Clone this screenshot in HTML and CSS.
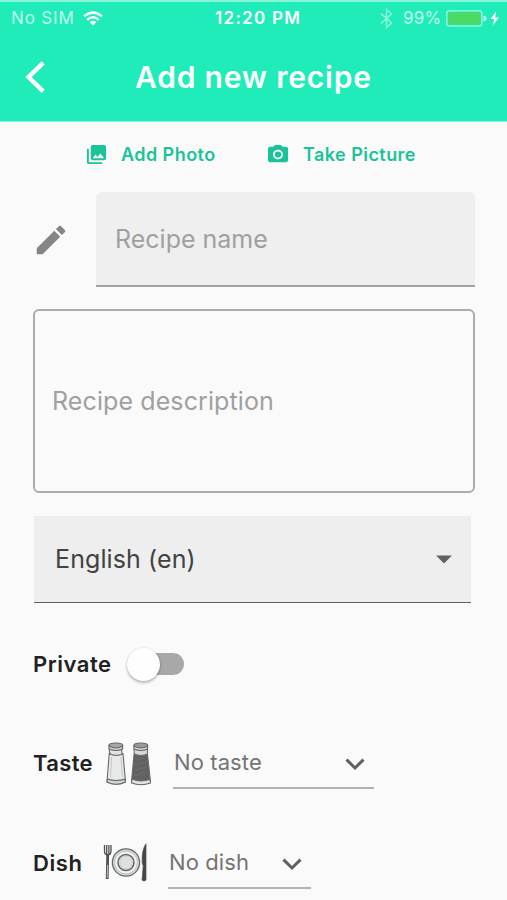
FILE: index.html
```html
<!DOCTYPE html>
<html lang="en">
<head>
<meta charset="utf-8">
<title>Add new recipe</title>
<link rel="stylesheet" href="styles.css">
</head>
<body>
<header class="header">
  <div class="status">
    <div class="status-left">
      <span class="carrier">No SIM</span>
      <svg class="wifi" width="20" height="15" viewBox="0 0 20 15" fill="none" stroke="#fff" stroke-width="2.4"><path d="M1 5.3Q10-2.5 19 5.3M4.2 8.8Q10 3.8 15.8 8.8"/><path d="M6.6 11.1Q10 8.3 13.4 11.1L10 14.6Z" fill="#fff" stroke="none"/></svg>
    </div>
    <span class="clock">12:20 PM</span>
    <div class="status-right">
      <svg class="bluetooth" width="13" height="21" viewBox="0 0 13 21" fill="none" stroke="#fff" stroke-width="1.5"><path d="M1 5.5L11.5 15 6.5 19.5V1.5L11.5 6 1 15.5"/></svg>
      <span class="percent">99%</span>
      <svg class="battery" width="53" height="17" viewBox="0 0 53 17"><rect x=".8" y=".8" width="35" height="15.2" rx="2.5" fill="none" stroke="#8df5dc" stroke-width="1.5"/><rect x="2.4" y="2.3" width="32" height="12.2" rx="1" fill="#4cd964"/><path d="M37.5 5.5Q40.5 6.2 40.5 8.5T37.5 11.5Z" fill="#c9fbef"/><path d="M50 1.5L44.5 9H48.2L46.7 15.5 53 7.4H49.2Z" fill="#fff"/></svg>
    </div>
  </div>
  <div class="navbar">
    <svg class="back" width="22" height="34" viewBox="0 0 22 34" fill="none" stroke="#fff" stroke-width="4.4"><path d="M18.2 2.8L3.5 17.1 18.2 31.4"/></svg>
    <h1 class="title">Add new recipe</h1>
  </div>
</header>
<main class="form">
  <div class="actions">
    <div class="action add-photo">
      <svg width="23" height="23" viewBox="0 0 24 24" fill="currentColor"><path d="M22 16V4c0-1.100-.9-2-2-2H8c-1.100 0-2 .9-2 2v12c0 1.100.9 2 2 2h12c1.100 0 2-.9 2-2zm-11-4l2.030 2.710L16 11l4 5H8l3-4zM2 6v14c0 1.100.9 2 2 2h14v-2H4V6H2z"/></svg>
      <span>Add Photo</span>
    </div>
    <div class="action take-picture">
      <svg width="24" height="23" viewBox="0 0 24 24" preserveAspectRatio="none" fill="currentColor"><circle cx="12" cy="12" r="3.200"/><path d="M9 2L7.170 4H4c-1.100 0-2 .9-2 2v12c0 1.100.9 2 2 2h16c1.100 0 2-.9 2-2V6c0-1.100-.9-2-2-2h-3.170L15 2H9zm3 15c-2.760 0-5-2.240-5-5s2.240-5 5-5 5 2.240 5 5-2.240 5-5 5z"/></svg>
      <span>Take Picture</span>
    </div>
  </div>
  <div class="name-row">
    <svg class="pencil" width="38" height="38" viewBox="0 0 24 24" fill="#858585"><path d="M3 17.250V21h3.750L17.810 9.940l-3.750-3.750L3 17.250zM20.710 7.040c.39-.39.39-1.020 0-1.410l-2.340-2.340c-.39-.39-1.020-.39-1.410 0l-1.830 1.830 3.750 3.750 1.830-1.830z"/></svg>
    <div class="name-field"><span class="name-label">Recipe name</span></div>
  </div>
  <div class="description"><span class="desc-label">Recipe description</span></div>
  <div class="language">
    <span class="lang-label">English (en)</span>
    <svg width="16" height="9" viewBox="0 0 16 9"><path d="M0 .5H16L8 8.500Z" fill="#616161"/></svg>
  </div>
  <div class="private-row">
    <span class="label private-label">Private</span>
    <div class="switch"><span class="thumb"></span></div>
  </div>
  <div class="row taste-row">
    <span class="label taste-label">Taste</span>
    <svg class="shakers" width="46" height="45" viewBox="0 0 46 45" stroke="#686868" stroke-width="1.1" stroke-linejoin="round">
      <path d="M3.200 11.500Q10 15 17 11.500L19.500 40Q11 44.500 1 40Z" fill="#e8e9e9"/>
      <path d="M3.400 6V10L5 12.500Q10 14 16 12.500L15.500 6Z" fill="#e2e4e4"/>
      <ellipse cx="9.800" cy="3.700" rx="7" ry="2.700" fill="#a5a8a8"/>
      <path d="M3 4V7Q10 10 16.600 7V4Q10 8 3 4Z" fill="#d5d7d7"/>
      <path d="M1.500 37Q10 40 19.200 37V40Q10 44.500 1 40Z" fill="#d1d4d4"/>
      <path d="M5.500 15L4.500 35M15 15L16.500 35" fill="none" stroke="#bbb" stroke-width=".8"/>
      <path d="M28 12.500Q34 15 41.500 12.500L44.500 40Q35 44.500 25.500 40Z" fill="#626262"/>
      <path d="M28.200 6V12Q35 15 41.500 12V6Z" fill="#d9dbdb"/>
      <ellipse cx="34.800" cy="3.700" rx="7" ry="2.700" fill="#999"/>
      <path d="M28 4V7Q35 10 41.600 7V4Q35 8 28 4Z" fill="#d5d7d7"/>
      <path d="M26 37Q34 40.500 44 37.500L44.500 41Q35 44.500 25.500 41Z" fill="#e2e4e4"/>
      <path d="M30 18L38 16M29 23L40 20M29 28L41 25M28 34L39 30" stroke="#6d6d6d" fill="none"/>
    </svg>
    <div class="select taste-select">
      <span class="taste-value">No taste</span>
      <svg width="20" height="13" viewBox="0 0 20 13" fill="none" stroke="#616161" stroke-width="3"><path d="M1.500 1.600L10 10 18.500 1.600"/></svg>
    </div>
  </div>
  <div class="row dish-row">
    <span class="label dish-label">Dish</span>
    <svg class="cutlery" width="46" height="41" viewBox="0 0 46 41" stroke="#505050" fill="none">
      <path d="M1.500 2V8Q1.500 12 4.700 12T8 8V2M3.700 2V11M5.900 2V11" stroke-width="1.300"/>
      <path d="M4.700 11L4.200 36" stroke-width="2.800"/><path d="M4.600 22L4.200 35" stroke="#bbb" stroke-width="1"/>
      <circle cx="23" cy="19.500" r="13.600" fill="#d9dddd" stroke="#666" stroke-width="1.300"/>
      <circle cx="23" cy="19.500" r="11.500" fill="#f0f2f2" stroke="#bbb" stroke-width="1"/>
      <circle cx="23" cy="19.500" r="8" fill="#dde1e1" stroke="#666" stroke-width="1.500"/>
      <circle cx="23" cy="19.500" r="6.200" stroke="#ccc" stroke-width=".8"/>
      <path d="M43 .8Q38.500 7 39.200 20L40.200 23 39 37Q41 39 43 37Z" fill="#454545" stroke-width=".7"/>
    </svg>
    <div class="select dish-select">
      <span class="dish-value">No dish</span>
      <svg width="20" height="13" viewBox="0 0 20 13" fill="none" stroke="#616161" stroke-width="3"><path d="M1.500 1.600L10 10 18.500 1.600"/></svg>
    </div>
  </div>
</main>
</body>
</html>
```
FILE: styles.css
```css
* { box-sizing: border-box; }
body {
  margin: 0;
  width: 507px;
  height: 900px;
  overflow: hidden;
  background: #fafafa;
  font-family: Inter, "Liberation Sans", sans-serif;
  white-space: nowrap;
}
svg { display: block; flex: none; }
.header {
  height: 122px;
  background: #1fecb9;
  border-top: 2px solid #86f5d9;
  border-bottom: 1px solid #86f5d9;
  color: #fff;
}
.status {
  height: 32px;
  display: grid;
  grid-template-columns: 215px 1fr auto;
  align-items: center;
  padding-right: 8px;
  font-size: 17px;
}
.status-left, .status-right { display: flex; align-items: center; }
.carrier { margin-left: 11px; width: 72px; color: #c2fbeb; letter-spacing: .85px; }
.clock { font-weight: 600; letter-spacing: 1.3px; }
.bluetooth { opacity: .5; margin-right: 10px; }
.percent { width: 43px; color: #c2fbeb; letter-spacing: .2px; }
.navbar { height: 86px; display: flex; align-items: center; }
.back { margin-left: 25px; }
.title { margin: 0 0 0 88px; font-size: 30px; font-weight: 600; letter-spacing: .8px; line-height: 36px; }
.form { padding: 0 32px 0 33px; }
.actions { height: 70px; display: flex; align-items: center; padding: 0 0 5px 52px; color: #1bc399; }
.action { display: flex; align-items: center; font-size: 18px; font-weight: 600; letter-spacing: .45px; }
.add-photo { width: 181px; gap: 13px; }
.take-picture { gap: 13px; }
.name-row { height: 95px; display: flex; align-items: center; }
.pencil { margin-left: -1px; margin-right: 26px; }
.name-field {
  flex: 1;
  height: 95px;
  display: flex;
  align-items: center;
  padding-left: 19px;
  background: #efefef;
  border-bottom: 2px solid #a2a2a2;
  border-radius: 6px 6px 0 0;
  font-size: 25px;
  color: #a0a0a0;
}
.description {
  height: 184px;
  margin-top: 22px;
  display: flex;
  align-items: center;
  padding-left: 17px;
  border: 2px solid #acacac;
  border-radius: 6px;
  font-size: 25px;
  letter-spacing: .1px;
  color: #a0a0a0;
}
.language {
  height: 87px;
  margin: 23px 4px 0 1px;
  display: flex;
  align-items: center;
  justify-content: space-between;
  padding: 0 19px 0 21px;
  background: #eee;
  border-bottom: 1px solid #606060;
  font-size: 25px;
  letter-spacing: .1px;
  color: #424242;
}
.label { font-size: 22px; font-weight: 600; color: #212121; letter-spacing: .55px; }
.private-row { height: 40px; margin-top: 41px; display: flex; align-items: center; }
.private-label { width: 100px; }
.switch { width: 51px; height: 22px; border-radius: 11px; background: #a8a8a8; display: flex; align-items: center; }
.thumb { width: 33px; height: 33px; flex: none; margin-left: -6px; border-radius: 50%; background: #fefefe; box-shadow: 0 2px 3px rgba(0,0,0,.25), 0 0 2px rgba(0,0,0,.12); }
.row { display: flex; align-items: center; height: 50px; }
.taste-row { margin-top: 54px; }
.taste-label { width: 73px; letter-spacing: .35px; }
.shakers { margin-top: 2px; }
.dish-row { margin-top: 50px; }
.dish-label { width: 70px; }
.select { height: 51px; display: flex; align-items: center; justify-content: space-between; border-bottom: 2px solid #b2b2b2; font-size: 22px; letter-spacing: .1px; color: #747474; }
.select svg { margin-top: 4px; }
.taste-select { width: 201px; margin-left: 21px; padding: 0 9px 0 1px; }
.dish-select { width: 143px; margin-left: 19px; padding: 0 9px 0 1px; }
```
